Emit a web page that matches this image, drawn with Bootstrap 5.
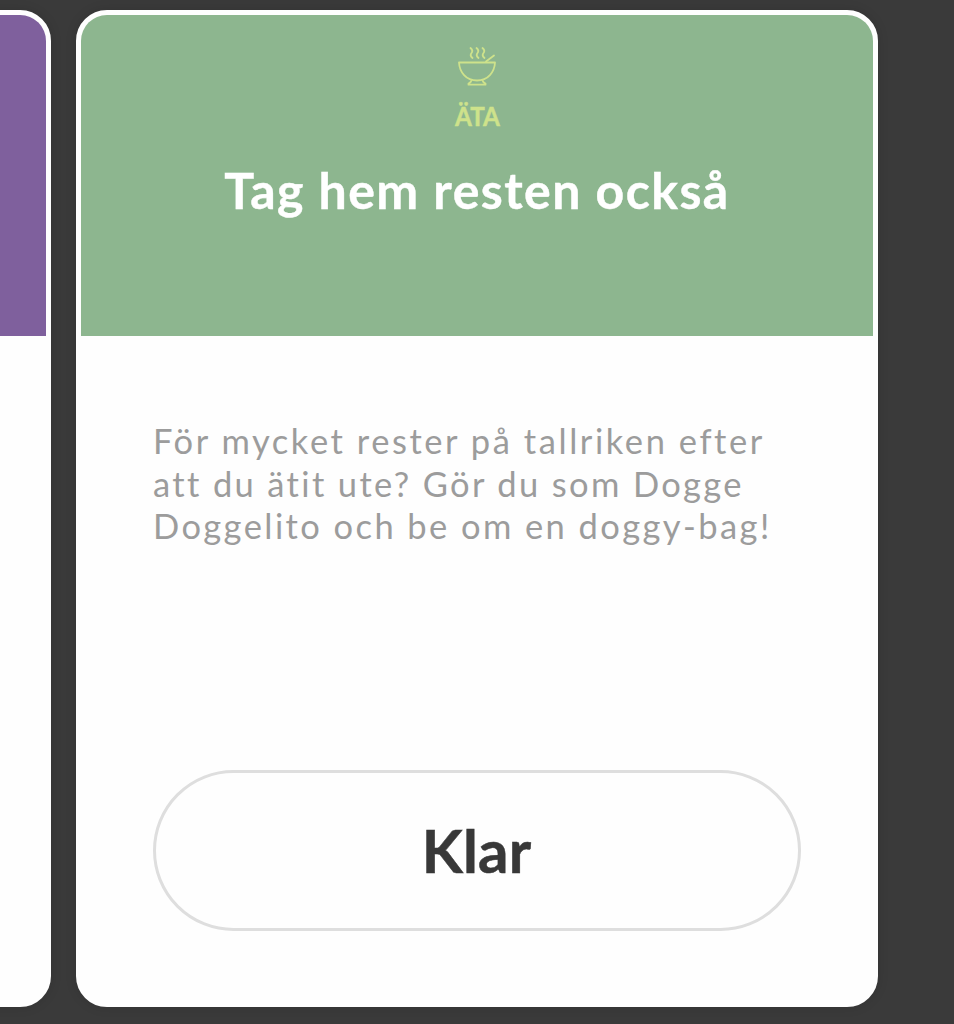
<!DOCTYPE html>
<html lang="sv">
<head>
<meta charset="utf-8">
<meta name="viewport" content="width=device-width, initial-scale=1">
<title>Tag hem resten också</title>
<link rel="stylesheet" href="https://cdn.jsdelivr.net/npm/bootstrap@5.3.0/dist/css/bootstrap.min.css">
<style>
  body { background: #3a3a3a; font-family: Lato, "Open Sans", sans-serif; height: 1024px; }
  .deck { padding-top: 10px; gap: 25px; margin-left: -750px; width: 1629px; }
  .tip { width: 801px; height: 997px; border: 5px solid #fefefe; border-radius: 31px; background: #fefefe; box-shadow: 0 0 12px rgba(0,0,0,.12); }
  .tip-current { width: 802px; }
  .tip-head { height: 321px; padding-top: 31px; background: #8db68f; border-radius: 26px 26px 0 0; }
  .tip-purple { background: #7f609d; }
  .topic { color: #cee28b; font-size: 27.5px; line-height: 33px; margin-top: 13px; }
  .topic span { transform: scaleX(.88); -webkit-text-stroke: .5px #cee28b; }
  .tip-title { color: #fff; font-size: 50px; line-height: 60px; letter-spacing: 1.45px; margin: 28px 0 0; white-space: nowrap; -webkit-text-stroke: .4px #fff; }
  .tip-copy { color: #9c9c9c; font-size: 34.5px; line-height: 42.5px; padding: 84px 0 0 72px; white-space: nowrap; height: 434px; }
  .l1 { letter-spacing: 2.55px; } .l2 { letter-spacing: 2.35px; } .l3 { letter-spacing: 2.42px; }
  .done { width: 648px; height: 161px; border: 3px solid #dedede; color: #383838; font-size: 60px; letter-spacing: .1px; margin-left: 72px; padding: 0 1px 1px 0; -webkit-text-stroke: .5px #383838; }
</style>
</head>
<body class="overflow-hidden">
<main class="deck d-flex">
  <article class="tip flex-shrink-0"><div class="tip-head tip-purple"></div></article>
  <article class="tip tip-current flex-shrink-0">
    <header class="tip-head text-center">
      <svg class="d-block mx-auto" width="40" height="40" viewBox="0 0 40 40" fill="none" stroke="#cee28b" stroke-width="1.8" stroke-linecap="round" stroke-linejoin="round" aria-hidden="true">
        <path d="M2 16.500H38C37.500 26 31 34.500 20 34.500S2.500 26 2 16.500Z"/>
        <path d="M14.500 34.500Q14 36.500 11.500 37.500V38.700H28.500V37.500Q26 36.500 25.500 34.500M29 15.500L37 9.500M13.500 2q3 2.500 1 5t1 5M19.500 2q3 2.500 1 5t1 5M25.500 2q3 2.500 1 5t1 5"/>
      </svg>
      <div class="topic fw-bold"><span class="d-inline-block">ÄTA</span></div>
      <h1 class="tip-title fw-bold">Tag hem resten också</h1>
    </header>
    <p class="tip-copy mb-0"><span class="l1">För mycket rester på tallriken efter</span><br><span class="l2">att du ätit ute? Gör du som Dogge</span><br><span class="l3">Doggelito och be om en doggy-bag!</span></p>
    <button type="button" class="done btn rounded-pill fw-bold">Klar</button>
  </article>
</main>
<script src="https://cdn.jsdelivr.net/npm/bootstrap@5.3.0/dist/js/bootstrap.bundle.min.js"></script>
</body>
</html>
